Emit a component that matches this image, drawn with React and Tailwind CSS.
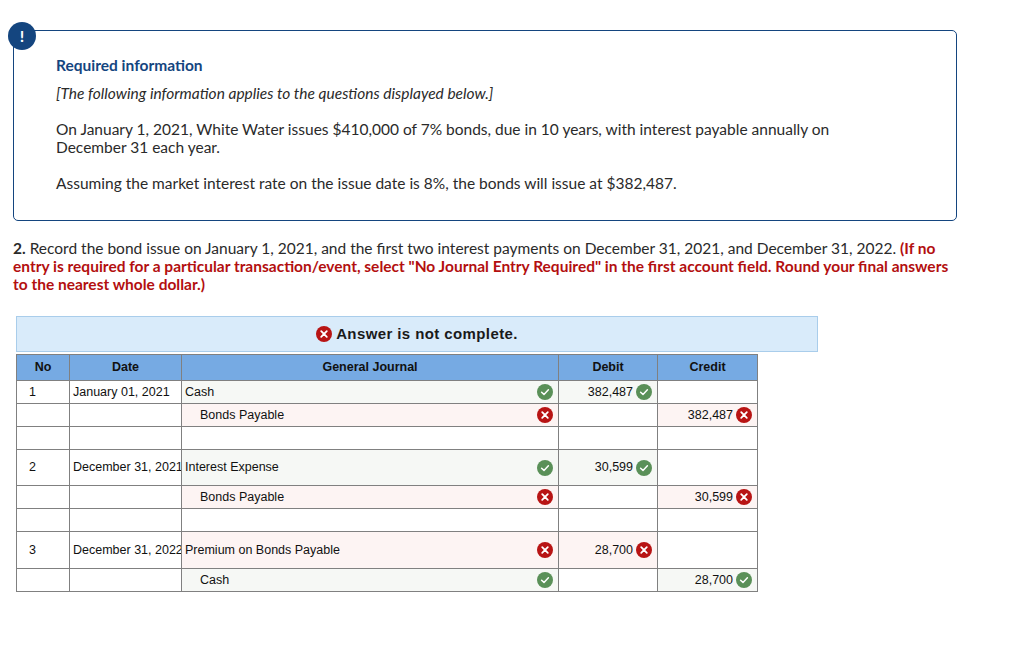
import React from "react";

const sans = "font-['Lato','Noto_Sans',sans-serif]";

function Ok({ cls = "" }) {
  return (
    <svg viewBox="0 0 16 16" className={`w-4 h-4 shrink-0 ${cls}`}>
      <circle cx="8" cy="8" r="8" fill="#5a9058" />
      <path d="M4.6 8.2 L7 10.4 L11.4 5.8" fill="none" stroke="#fff" strokeWidth="1.5" strokeLinecap="round" strokeLinejoin="round" />
    </svg>
  );
}
function Bad({ cls = "" }) {
  return (
    <svg viewBox="0 0 16 16" className={`w-4 h-4 shrink-0 ${cls}`}>
      <circle cx="8" cy="8" r="8" fill="#b81414" />
      <path d="M5.2 5.2 L10.8 10.8 M10.8 5.2 L5.2 10.8" fill="none" stroke="#fff" strokeWidth="1.8" strokeLinecap="round" />
    </svg>
  );
}

const rows = [
  { h: "h-[23px]", no: "1", date: "January 01, 2021", acct: "Cash", acctOk: true, debit: "382,487", debitOk: true },
  { h: "h-[23px]", acct: "Bonds Payable", indent: true, acctOk: false, credit: "382,487", creditOk: false },
  { h: "h-[23px]" },
  { h: "h-[36px]", no: "2", date: "December 31, 2021", acct: "Interest Expense", acctOk: true, debit: "30,599", debitOk: true },
  { h: "h-[23px]", acct: "Bonds Payable", indent: true, acctOk: false, credit: "30,599", creditOk: false },
  { h: "h-[23px]" },
  { h: "h-[37px]", no: "3", date: "December 31, 2022", acct: "Premium on Bonds Payable", acctOk: false, debit: "28,700", debitOk: false },
  { h: "h-[23px]", acct: "Cash", indent: true, acctOk: true, credit: "28,700", creditOk: true },
];

const cell = "border border-[#808080] p-0";

function Amount({ value, ok }) {
  const bg = value ? (ok ? "bg-[#f6f8f5]" : "bg-[#fdf4f3]") : "";
  return (
    <td className={`${cell} ${bg}`}>
      {value && (
        <div className="flex items-center justify-end gap-[3px] pr-[5px]">
          <span>{value}</span>
          {ok ? <Ok /> : <Bad />}
        </div>
      )}
    </td>
  );
}

export default function App() {
  return (
    <div className={`relative w-[1024px] h-[655px] overflow-hidden bg-white text-[#2a2a2a] ${sans}`}>
      <div className="pt-[30px] pl-[13px]">
        <div className="relative w-[944px] h-[191px] rounded-[5px] border border-[#14457f] pt-[25px] pl-[42px] text-[15.5px] leading-[18px]">
          <div className="absolute left-[-6px] top-[-9px] w-[28px] h-[28px] rounded-full bg-[#14457f] text-white flex items-center justify-center font-bold text-[16px]">!</div>
          <h2 className="font-bold text-[#14457f]">Required information</h2>
          <p className="italic mt-[10px]">[The following information applies to the questions displayed below.]</p>
          <p className="mt-[18px] w-[800px]">On January 1, 2021, White Water issues $410,000 of 7% bonds, due in 10 years, with interest payable annually on December 31 each year.</p>
          <p className="mt-[18px]">Assuming the market interest rate on the issue date is 8%, the bonds will issue at $382,487.</p>
        </div>
      </div>

      <p className="mt-[18px] ml-[13px] w-[940px] text-[15.5px] leading-[18px]">
        <b>2.</b> Record the bond issue on January 1, 2021, and the first two interest payments on December 31, 2021, and December 31, 2022.{" "}
        <b className="text-[#b30f0f]">(If no entry is required for a particular transaction/event, select "No Journal Entry Required" in the first account field. Round your final answers to the nearest whole dollar.)</b>
      </p>

      <div className="mt-[23px] ml-[16px] w-[802px] h-[36px] flex items-center justify-center gap-[4px] bg-[#d9ebfa] border border-[#a9cdeb] font-bold text-[15px] text-[#1a1a1a] font-['Liberation_Sans',sans-serif] tracking-[0.4px]">
        <Bad />
        <span>Answer is not complete.</span>
      </div>

      <table className="mt-[2px] ml-[16px] w-[741px] table-fixed border-collapse font-['Liberation_Sans',sans-serif] text-[12.5px] text-[#111]">
        <colgroup>
          <col className="w-[53px]" />
          <col className="w-[112px]" />
          <col className="w-[377px]" />
          <col className="w-[99px]" />
          <col className="w-[100px]" />
        </colgroup>
        <thead>
          <tr className="h-[26px] bg-[#76aae3] font-bold">
            <th className={cell}>No</th>
            <th className={cell}>Date</th>
            <th className={cell}>General Journal</th>
            <th className={cell}>Debit</th>
            <th className={cell}>Credit</th>
          </tr>
        </thead>
        <tbody>
          {rows.map((r, i) => {
            const has = r.acct !== undefined;
            const acctBg = has ? (r.acctOk ? "bg-[#f6f8f5]" : "bg-[#fdf4f3]") : "";
            return (
              <tr key={i} className={r.h}>
                <td className={`${cell} pl-[12px]`}>{r.no}</td>
                <td className={`${cell} pl-[3px] overflow-hidden whitespace-nowrap`}>{r.date}</td>
                <td className={`${cell} ${acctBg}`}>
                  {has && (
                    <div className={`flex items-center justify-between pr-[5px] ${r.indent ? "pl-[18px]" : "pl-[3px]"}`}>
                      <span>{r.acct}</span>
                      {r.acctOk ? <Ok /> : <Bad />}
                    </div>
                  )}
                </td>
                <Amount value={r.debit} ok={r.debitOk} />
                <Amount value={r.credit} ok={r.creditOk} />
              </tr>
            );
          })}
        </tbody>
      </table>
    </div>
  );
}
